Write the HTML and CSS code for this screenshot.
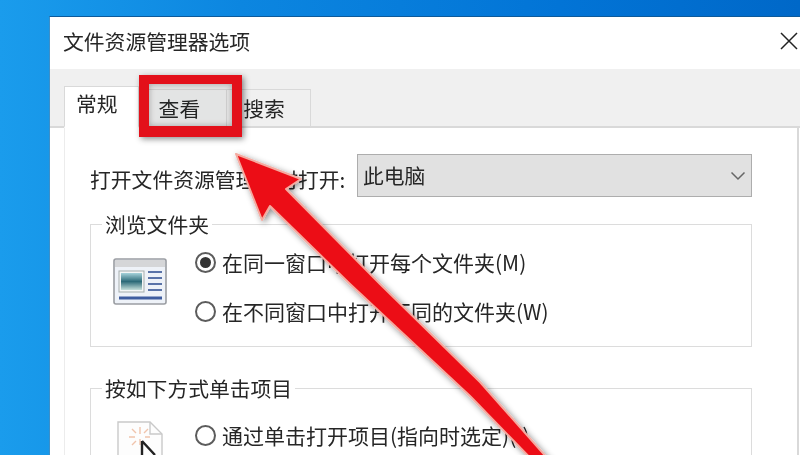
FILE: index.html
```html
<!DOCTYPE html>
<html lang="zh-CN">
<head>
<meta charset="utf-8">
<title>文件资源管理器选项</title>
<link rel="stylesheet" href="styles.css">
</head>
<body>
<div class="dialog">
  <header class="titlebar">
    <span class="title">文件资源管理器选项</span>
    <svg class="close" width="18" height="18" viewBox="0 0 18 18"><path d="M1 1L17 17M17 1L1 17" stroke="#222" stroke-width="1.5" fill="none"/></svg>
  </header>
  <nav class="tabs">
    <span class="tab tab-active">常规</span>
    <span class="tab tab-view">查看</span>
    <span class="tab tab-search">搜索</span>
  </nav>
  <main class="panel">
    <div class="open-row">
      <span class="open-label">打开文件资源管理器时打开:</span>
      <div class="combo">
        <span>此电脑</span>
        <svg width="16" height="10" viewBox="0 0 16 10"><path d="M1.5 1.5L8 8L14.5 1.5" stroke="#666" stroke-width="1.5" fill="none"/></svg>
      </div>
    </div>
    <fieldset class="group">
      <legend class="legend">浏览文件夹</legend>
      <div class="group-body">
        <svg class="icon-window" width="54" height="47" viewBox="0 0 54 47">
          <rect x="1" y="1" width="52" height="45" rx="2" fill="#eef2f8" stroke="#9a9da2" stroke-width="1.6"/>
          <rect x="2" y="2" width="50" height="7" fill="#d5d6d8"/>
          <rect x="6" y="13" width="25" height="21" fill="#f4f6f6" stroke="#a5adad"/>
          <defs><linearGradient id="pic" x1="0" y1="0" x2="0" y2="1"><stop offset="0" stop-color="#a5d2da"/><stop offset=".5" stop-color="#2c6a78"/><stop offset="1" stop-color="#c5dfda"/></linearGradient></defs>
          <rect x="8" y="15" width="21" height="17" fill="url(#pic)"/>
          <path d="M35 14H49M35 20H49M35 26H49M35 32H49" stroke="#5a73a8" stroke-width="2"/>
          <path d="M6 40H49" stroke="#3f5da0" stroke-width="3"/>
        </svg>
        <div class="options">
          <label class="option"><span class="radio radio-on"></span>在同一窗口中打开每个文件夹(M)</label>
          <label class="option"><span class="radio"></span>在不同窗口中打开不同的文件夹(W)</label>
        </div>
      </div>
    </fieldset>
    <fieldset class="group group-click">
      <legend class="legend">按如下方式单击项目</legend>
      <div class="group-body">
        <svg class="icon-doc" width="46" height="40" viewBox="0 0 46 40">
          <path d="M1 1H33L45 13V40H1Z" fill="#fdfdfd" stroke="#c9c9c9" stroke-width="1.4"/>
          <path d="M33 1V13H45" fill="none" stroke="#c9c9c9" stroke-width="1.4"/>
          <path d="M23 6V13M23 18V24M12 16H18M28 16H33M15 8L19 12M31 8L27 12M15 24L19 20" stroke="#f0c4ac" stroke-width="1.4" fill="none"/>
          <path d="M25 20V40M25 20L38 34" stroke="#222" stroke-width="2.4" fill="none"/>
        </svg>
        <div class="options">
          <label class="option"><span class="radio"></span>通过单击打开项目(指向时选定)(I)</label>
        </div>
      </div>
    </fieldset>
  </main>
</div>
<div class="highlight"></div>
<svg class="arrow" width="800" height="455" viewBox="0 0 800 455">
  <defs><filter id="soft" x="-10%" y="-10%" width="120%" height="120%"><feDropShadow dx="2" dy="2" stdDeviation="3" flood-color="#000" flood-opacity=".45"/></filter></defs>
  <polygon points="236,154 301,179 286,189 380,284 480,382 556,468 540,468 470,396 350,284 270,206 262,220" fill="#ec1116" stroke="#f5aaa0" stroke-width="2" stroke-linejoin="round" filter="url(#soft)"/>
</svg>
</body>
</html>
```
FILE: styles.css
```css
* { box-sizing: border-box; }
html, body { margin: 0; height: 455px; overflow: hidden; }
body {
  position: relative;
  background: linear-gradient(90deg, #1a9cec 0%, #0c86e0 30%, #0274d6 70%, #0068c8 100%);
  font-family: "Noto Sans CJK SC", "Liberation Sans", sans-serif;
  font-size: 20.8px;
  color: #262626;
}
.dialog {
  position: absolute;
  left: 49px;
  top: 16px;
  width: 751px;
  height: 439px;
  overflow: hidden;
  background: #fff;
  border-top: 1px solid #0d5a9a;
  border-left: 1px solid #3d8fc8;
  filter: blur(.6px);
  display: flex;
  flex-direction: column;
}
.titlebar {
  height: 52px;
  flex: none;
  display: flex;
  align-items: center;
  justify-content: space-between;
  padding: 0 2px 0 14px;
  line-height: 1;
}
.title { margin: -4px 0 0 -1px; }
.close { margin-top: -4px; }
.tabs {
  height: 59px;
  flex: none;
  background: #f0f0f0;
  border-bottom: 2px solid #d9d9d9;
  padding-left: 14px;
  display: flex;
  align-items: flex-end;
}
.tab {
  height: 39px;
  margin-bottom: -2px;
  display: flex;
  align-items: center;
  background: #f0f0f0;
  border: 1.5px solid #d9d9d9;
  border-bottom: 2px solid #d9d9d9;
  border-left: 0;
  line-height: 1;
}
.tab-active {
  height: 42px;
  background: #fff;
  border-left: 1.5px solid #d9d9d9;
  border-bottom: 2px solid #fff;
  padding: 0 20px 6px 11px;
  position: relative;
  z-index: 1;
}
.tab-view { padding: 0 26px 0 20px; }
.tab-search { padding: 0 25px 0 16px; }
.panel {
  flex: 1;
  min-height: 0;
  margin-left: 14px;
  margin-right: 1px;
  background: #fff;
  border-right: 2px solid #d9d9d9;
  border-left: 1px solid #ececec;
  padding: 26px 0 0 25px;
}
.open-row { display: flex; align-items: center; height: 43px; width: 662px; }
.open-label { width: 267px; flex: none; line-height: 1; margin-top: 7px; }
.combo {
  flex: 1;
  height: 43px;
  background: #e1e1e1;
  border: 1.5px solid #adadad;
  display: flex;
  align-items: center;
  justify-content: space-between;
  padding: 0 5px 0 5px;
  line-height: 1;
}
.combo span { margin-top: -1px; }
.group {
  margin: 13px 0 0;
  padding: 0 0 0 22px;
  width: 662px;
  height: 137px;
  border: 1.5px solid #dcdcdc;
  min-width: 0;
}
.group-click { margin-top: 27px; height: 120px; }
.legend { padding: 0 3px; margin-left: -11px; line-height: 28px; }
.group-body { display: flex; padding-top: 10px; }
.group-click .group-body { padding-top: 19px; }
.icon-window { flex: none; margin: 10px 28px 0 0; }
.icon-doc { flex: none; margin: 0 32px 0 4px; }
.options { display: flex; flex-direction: column; gap: 21px; }
.option { display: flex; align-items: center; height: 28px; gap: 6px; white-space: nowrap; line-height: 1; font-size: 21px; }
.radio {
  width: 21px;
  height: 21px;
  flex: none;
  border: 2px solid #5c5c5c;
  border-radius: 50%;
  background: #fff;
  display: flex;
  align-items: center;
  justify-content: center;
}
.radio-on::after {
  content: "";
  width: 11px;
  height: 11px;
  border-radius: 50%;
  background: #333;
}
.highlight {
  position: absolute;
  left: 139px;
  top: 75px;
  width: 103px;
  height: 62px;
  border: solid #e3101a;
  border-width: 9px 10px 11px 10px;
  background: rgba(0, 10, 10, .05);
  box-shadow: 2px 2px 6px rgba(0,0,0,.45), inset 0 0 6px rgba(0,0,0,.3);
  filter: blur(.4px);
}
.arrow { position: absolute; left: 0; top: 0; }
```
